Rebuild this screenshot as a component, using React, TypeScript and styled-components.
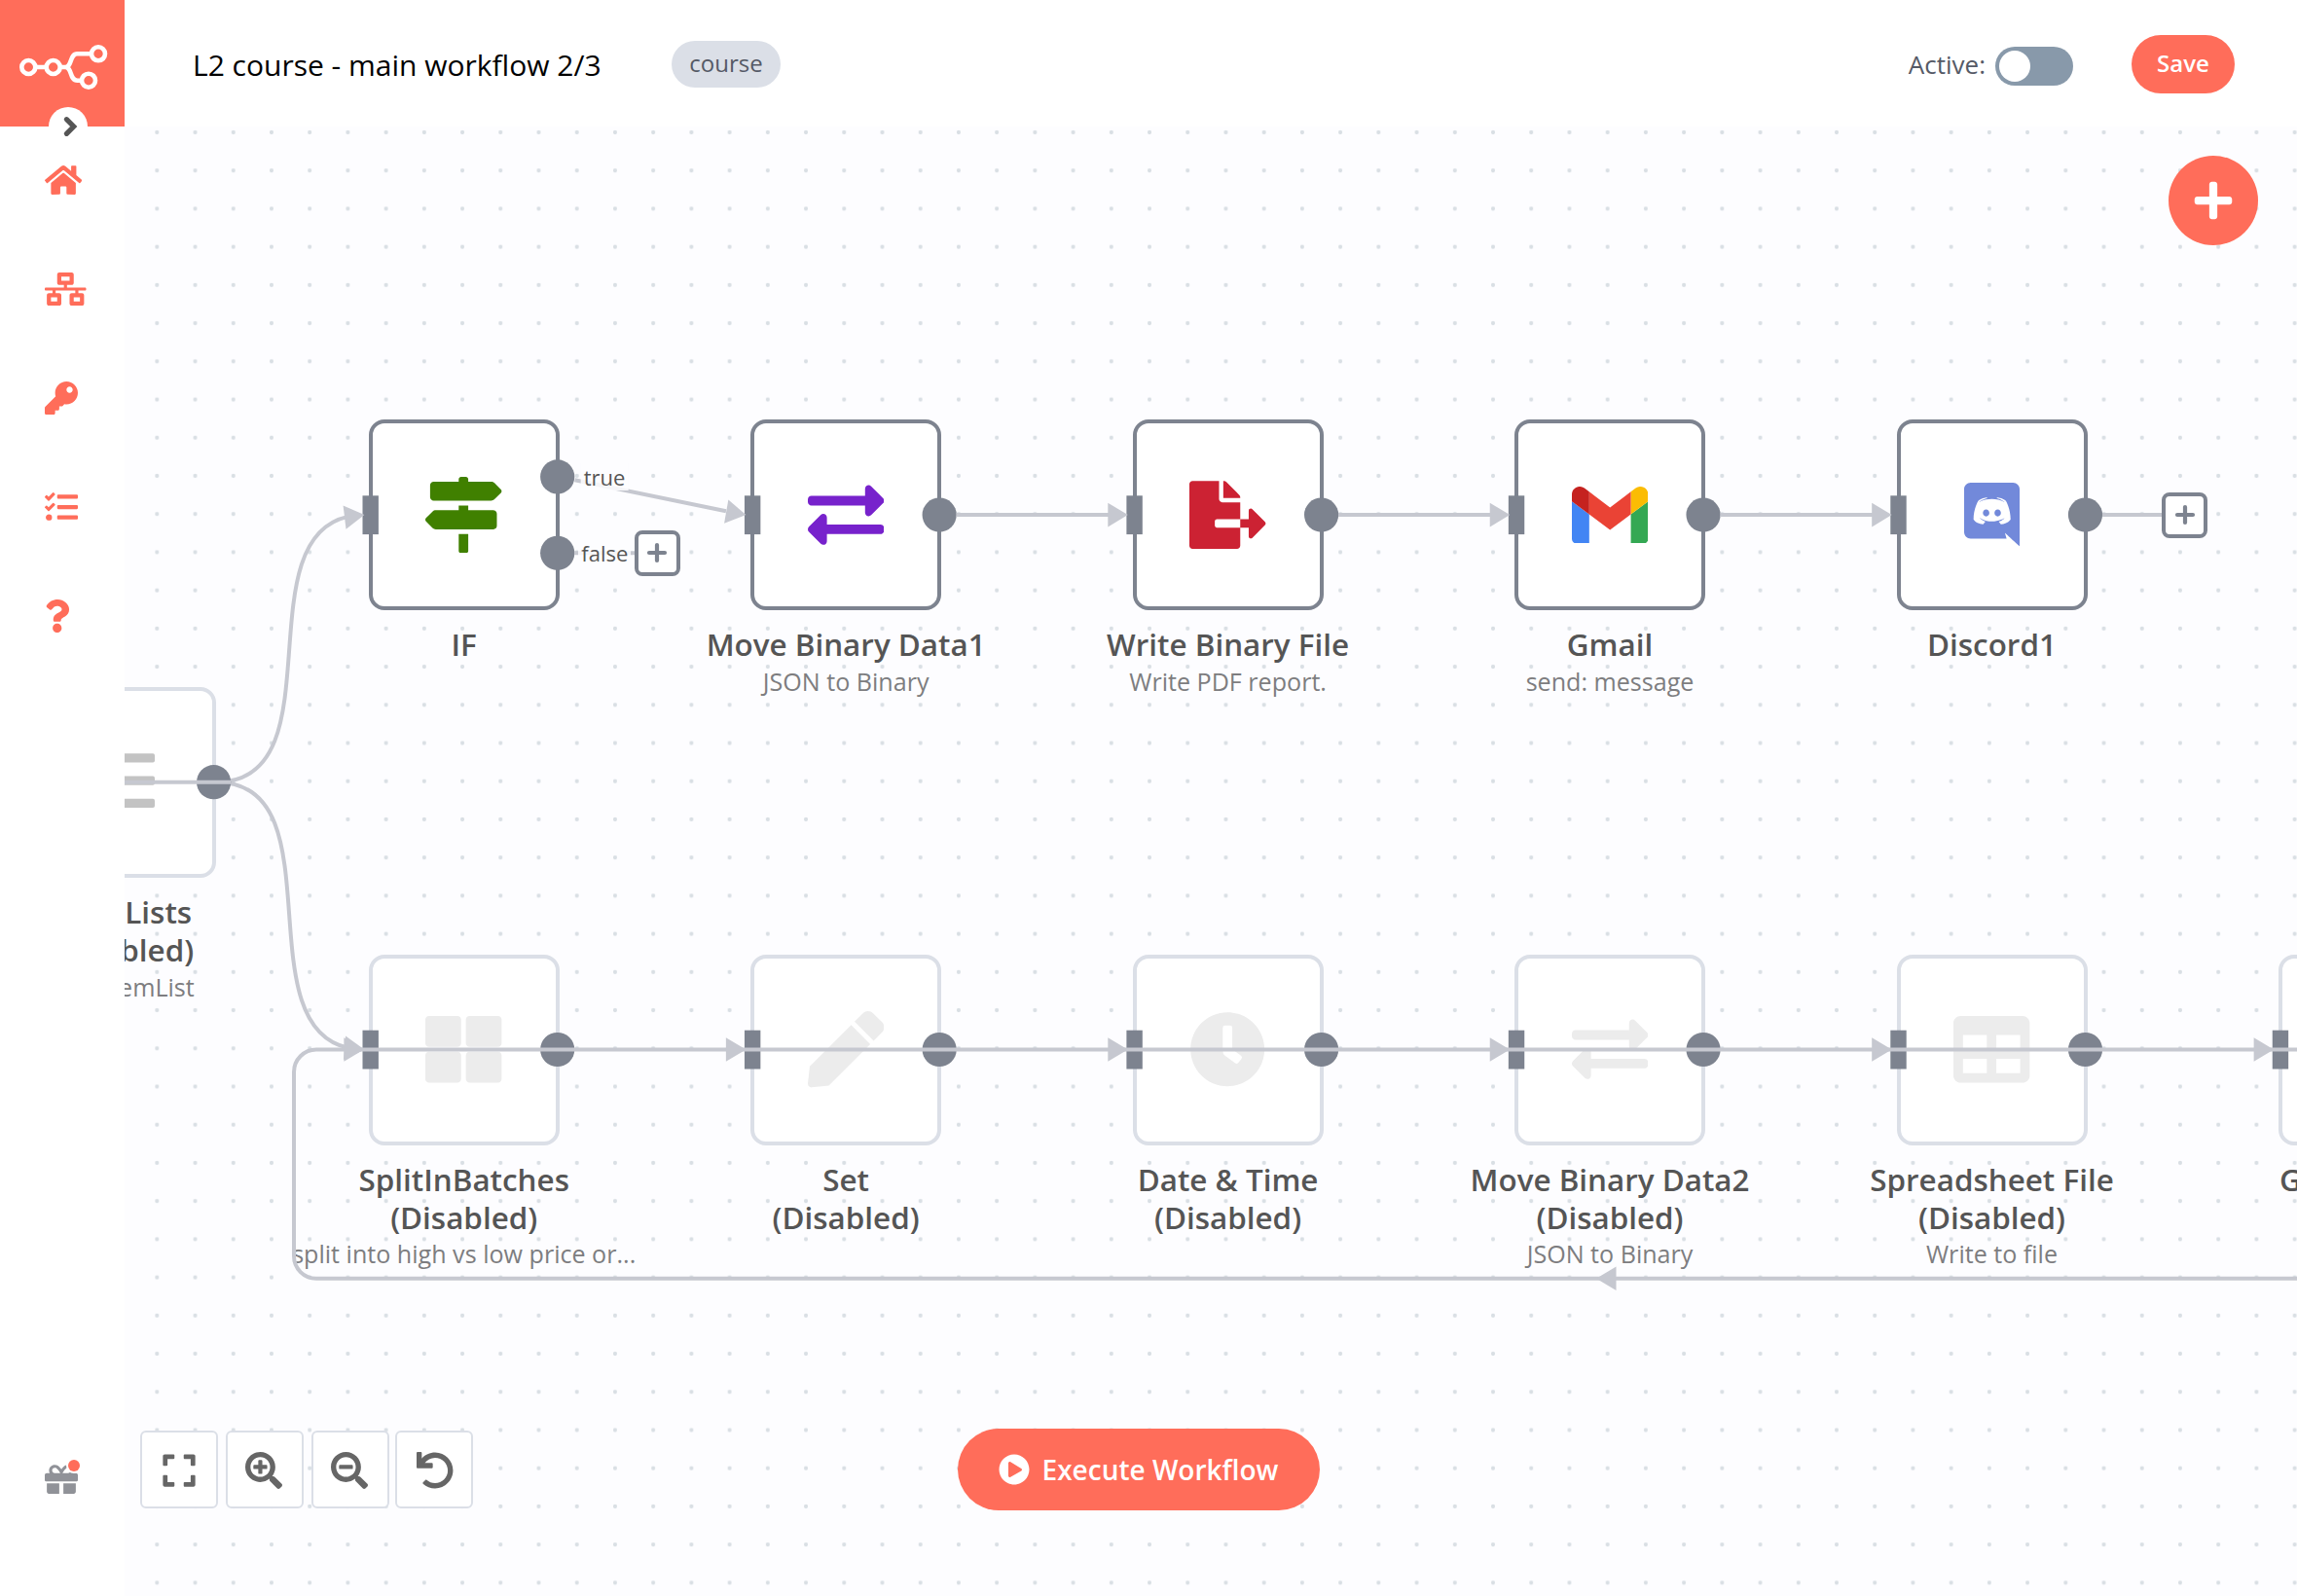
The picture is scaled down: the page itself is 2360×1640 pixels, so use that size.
import React from 'react';
import styled, { createGlobalStyle } from 'styled-components';
import {
  FaClock,
  FaExchangeAlt,
  FaExpand,
  FaFileExport,
  FaGift,
  FaHome,
  FaKey,
  FaMapSigns,
  FaNetworkWired,
  FaPen,
  FaPlayCircle,
  FaPlus,
  FaQuestion,
  FaSearchMinus,
  FaSearchPlus,
  FaTable,
  FaTasks,
  FaThLarge,
  FaUndo,
} from 'react-icons/fa';

const color = {
  primary: '#ff6d5a',
  canvas: '#fdfdff',
  endpoint: '#7d838f',
  line: '#c6c8d0',
  light: '#dbdfe7',
  disabledIcon: '#ececec',
};

const ORIGIN_X = 128;
const ORIGIN_Y = 130;
const STEP = 392.45;

const GlobalStyle = createGlobalStyle`
  * { box-sizing: border-box; }
  body {
    margin: 0;
    font-family: 'Open Sans', sans-serif;
    background: #fff;
  }
`;

const Shell = styled.div`
  display: grid;
  grid-template-columns: 128px 1fr;
  width: 2360px;
  height: 1640px;
  overflow: hidden;
`;

/* ---------- sidebar ---------- */

const Sidebar = styled.aside`
  position: relative;
  display: flex;
  flex-direction: column;
  background: #fff;
`;

const LogoBox = styled.div`
  height: 130px;
  background: ${color.primary};
`;

const Expander = styled.button`
  position: absolute;
  left: 50px;
  top: 110px;
  width: 40px;
  height: 40px;
  padding: 0;
  border: 0;
  border-radius: 50%;
  background: #fff;
  display: flex;
`;

const Menu = styled.nav`
  flex: 1;
  display: flex;
  flex-direction: column;
  margin-top: -1px;
  padding-bottom: 64px;
`;

const MenuItem = styled.a<{ $iconWidth?: number; $muted?: boolean }>`
  display: flex;
  align-items: center;
  height: 112px;
  padding-left: 46px;
  color: ${(p) => (p.$muted ? '#909298' : color.primary)};
  margin-top: ${(p) => (p.$muted ? 'auto' : '0')};
  svg {
    height: 34px;
    width: ${(p) => p.$iconWidth || 34}px;
  }
`;

const GiftWrap = styled.span`
  position: relative;
  display: flex;
`;

const NotifyDot = styled.span`
  position: absolute;
  left: 24px;
  top: -3px;
  width: 12px;
  height: 12px;
  border-radius: 50%;
  background: ${color.primary};
  box-shadow: 0 0 0 2px #fff;
`;

/* ---------- header ---------- */

const Main = styled.main`
  display: flex;
  flex-direction: column;
  min-width: 0;
`;

const Header = styled.header`
  display: flex;
  align-items: center;
  height: 130px;
  padding: 0 64px 0 70px;
  background: #fff;
`;

const Title = styled.h1`
  margin: 4px 0 0;
  width: 492px;
  font-size: 30px;
  font-weight: 400;
  line-height: 42px;
  color: #000;
  white-space: nowrap;
`;

const Tag = styled.span`
  width: 112px;
  height: 48px;
  margin-top: 2px;
  border-radius: 24px;
  background: ${color.light};
  color: #555a66;
  font-size: 24px;
  line-height: 46px;
  text-align: center;
`;

const HeaderActions = styled.div`
  display: flex;
  align-items: center;
  margin-left: auto;
`;

const ActiveLabel = styled.span`
  margin: 2px 10px 0 0;
  font-size: 26px;
  line-height: 40px;
  color: #555a66;
`;

const Toggle = styled.span`
  display: flex;
  align-items: center;
  width: 80px;
  height: 40px;
  margin-top: 6px;
  padding: 4px;
  border-radius: 20px;
  background: #8899aa;
`;

const Knob = styled.span`
  width: 32px;
  height: 32px;
  border-radius: 50%;
  background: #fff;
`;

const SaveButton = styled.button`
  width: 106px;
  height: 60px;
  margin: 2px 0 0 60px;
  padding: 0 0 3px;
  border: 0;
  border-radius: 30px;
  background: ${color.primary};
  color: #fff;
  font: 600 24px 'Open Sans', sans-serif;
`;

/* ---------- canvas ---------- */

const Canvas = styled.section`
  position: relative;
  flex: 1;
  overflow: hidden;
  background-color: ${color.canvas};
`;

const Layer = styled.svg`
  position: absolute;
  inset: 0;
  width: 2232px;
  height: 1510px;
`;

const NodeWrap = styled.div<{ $x: number; $y: number }>`
  position: absolute;
  left: ${(p) => p.$x - ORIGIN_X - 196}px;
  top: ${(p) => p.$y - ORIGIN_Y - 98}px;
  width: 392px;
  display: flex;
  flex-direction: column;
  align-items: center;
`;

const NodeBox = styled.div<{ $disabled?: boolean }>`
  width: 196px;
  height: 196px;
  display: flex;
  align-items: center;
  justify-content: center;
  border: 4px solid ${(p) => (p.$disabled ? color.light : color.endpoint)};
  border-radius: 16px;
  background: #fff;
`;

const NodeIcon = styled.span<{ $color?: string }>`
  display: flex;
  color: ${(p) => p.$color || 'inherit'};
  font-size: 78.4px;
`;

const NodeName = styled.div`
  margin-top: 15px;
  font-size: 31.4px;
  font-weight: 600;
  line-height: 39.2px;
  color: #555;
  text-align: center;
  white-space: pre-line;
`;

const NodeNote = styled.div`
  margin-top: 1.5px;
  font-size: 25.1px;
  line-height: 34.7px;
  color: #7d7d80;
  white-space: nowrap;
`;

const OutputLabel = styled.span<{ $x: number; $y: number }>`
  position: absolute;
  left: ${(p) => p.$x - ORIGIN_X}px;
  top: ${(p) => p.$y - ORIGIN_Y}px;
  transform: translate(-50%, -50%);
  padding: 0 3px;
  background: rgba(253, 253, 255, 0.85);
  font-size: 22px;
  line-height: 28px;
  color: #555;
`;

const PlusBox = styled.span<{ $x: number; $y: number }>`
  position: absolute;
  left: ${(p) => p.$x - ORIGIN_X - 23.5}px;
  top: ${(p) => p.$y - ORIGIN_Y - 23.5}px;
  width: 47px;
  height: 47px;
  display: flex;
  align-items: center;
  justify-content: center;
  border: 4px solid ${color.endpoint};
  border-radius: 8px;
  background: #fff;
`;

const AddButton = styled.button`
  position: absolute;
  top: 30px;
  right: 40px;
  width: 92px;
  height: 92px;
  display: flex;
  align-items: center;
  justify-content: center;
  padding: 0;
  border: 0;
  border-radius: 50%;
  background: ${color.primary};
  color: #fff;
  svg {
    height: 44px;
    width: 44px;
  }
`;

const ZoomControls = styled.div`
  position: absolute;
  left: 16px;
  bottom: 90px;
  display: flex;
  gap: 8px;
`;

const ControlButton = styled.button<{ $last?: boolean; $first?: boolean }>`
  width: 80px;
  height: 80px;
  margin-left: ${(p) => (p.$last ? '-2px' : '0')};
  padding: ${(p) => (p.$last ? '1px 0 0 1px' : p.$first ? '1px 0 0 0' : '1px 2px 0 0')};
  display: flex;
  align-items: center;
  justify-content: center;
  border: 2px solid ${color.light};
  border-radius: 6px;
  background: #fff;
  color: #666;
  svg {
    height: 38px;
    width: 38px;
  }
`;

const ExecuteButton = styled.button`
  position: absolute;
  left: 856px;
  bottom: 88px;
  width: 372px;
  height: 84px;
  display: flex;
  align-items: center;
  justify-content: center;
  gap: 13px;
  padding: 0 1px 1px 0;
  border: 0;
  border-radius: 42px;
  background: ${color.primary};
  color: #fff;
  font: 600 28px 'Open Sans', sans-serif;
  svg {
    width: 32px;
    height: 32px;
  }
`;

/* ---------- drawings ---------- */

const Logo = () => (
  <svg width="128" height="130" viewBox="0 0 128 130" fill="none" stroke="#fff" strokeWidth="4.6">
    <circle cx="29.3" cy="69" r="7" />
    <circle cx="54.7" cy="69" r="7" />
    <circle cx="101" cy="55.3" r="7" />
    <circle cx="91" cy="82.7" r="7" />
    <path d="M36.5 69H47.5M62 69H67C74.5 69 71 55.3 79.5 55.3H94M67 69C74.5 69 71 82.7 79.5 82.7H84" />
  </svg>
);

const Chevron = () => (
  <svg width="40" height="40" viewBox="0 0 40 40" fill="none" stroke="#555" strokeWidth="5.2" strokeLinecap="round">
    <path d="M18.4 12.7L25.7 20L18.4 27.3" />
  </svg>
);

const GmailIcon = () => (
  <svg width="78.4" height="58.8" viewBox="52 42 88 66">
    <path fill="#4285f4" d="M58 108h14V74L52 59v43c0 3.32 2.69 6 6 6" />
    <path fill="#34a853" d="M120 108h14c3.32 0 6-2.69 6-6V59l-20 15" />
    <path fill="#fbbc04" d="M120 48v26l20-15v-8c0-7.42-8.47-11.65-14.4-7.2" />
    <path fill="#ea4335" d="M72 74V48l24 18 24-18v26L96 92" />
    <path fill="#c5221f" d="M52 51v8l20 15V48l-5.6-4.2c-5.94-4.45-14.4-.22-14.4 7.2" />
  </svg>
);

const DiscordIcon = () => (
  <svg width="57" height="65.4" viewBox="0 0 448 512" fill="#7289da">
    <path d="M297.216 243.2c0 15.616-11.52 28.416-26.112 28.416-14.336 0-26.112-12.8-26.112-28.416s11.52-28.416 26.112-28.416c14.592 0 26.112 12.8 26.112 28.416zm-119.552-28.416c-14.592 0-26.112 12.8-26.112 28.416s11.776 28.416 26.112 28.416c14.592 0 26.112-12.8 26.112-28.416.256-15.616-11.52-28.416-26.112-28.416zM448 52.736V512c-64.494-56.994-43.868-38.128-118.784-107.776l13.568 47.36H52.48C23.552 451.584 0 428.032 0 398.848V52.736C0 23.552 23.552 0 52.48 0h343.04C424.448 0 448 23.552 448 52.736zm-72.96 242.688c0-82.432-36.864-149.248-36.864-149.248-36.864-27.648-71.936-26.88-71.936-26.88l-3.584 4.096c43.52 13.312 63.744 32.512 63.744 32.512-60.811-33.329-132.244-33.335-191.232-7.424-9.472 4.352-15.104 7.424-15.104 7.424s21.248-20.224 67.328-33.536l-2.56-3.072s-35.072-.768-71.936 26.88c0 0-36.864 66.816-36.864 149.248 0 0 21.504 37.12 78.08 38.912 0 0 9.472-11.52 17.152-21.248-32.512-9.728-44.8-30.208-44.8-30.208 3.766 2.636 9.976 6.053 10.496 6.4 43.21 24.198 104.588 32.126 159.744 8.96 8.96-3.328 18.944-8.192 29.44-15.104 0 0-12.8 20.992-46.336 30.464 7.68 9.728 16.896 20.736 16.896 20.736 56.576-1.792 78.336-38.912 78.336-38.912z" />
  </svg>
);

const ListIcon = () => (
  <svg width="70" height="78" viewBox="0 0 70 78" fill="#c3c3c3">
    {[9.2, 32.4, 55.7].map((y) => (
      <g key={y}>
        <rect x="0" y={y} width="10" height="9.3" rx="2" />
        <rect x="18" y={y} width="52" height="9.3" rx="2" />
      </g>
    ))}
  </svg>
);

const PlusGlyph = () => (
  <svg width="22" height="22" viewBox="0 0 22 22" stroke={color.endpoint} strokeWidth="4.2" strokeLinecap="round">
    <path d="M11 3V19M3 11H19" />
  </svg>
);

/* ---------- workflow data ---------- */

type FlowNode = {
  x: number;
  y: number;
  name: string;
  note?: string;
  icon: React.ReactNode;
  tint?: string;
  disabled?: boolean;
  outputs: number[];
};

const ROW1 = 529.1;
const ROW2 = 1078.5;
const MID = 803.7;
const FIRST = 476.7;
const col = (n: number) => FIRST + STEP * n;
const off = '\n(Disabled)';

const nodes: FlowNode[] = [
  { x: 123.6, y: MID, name: 'Item Lists' + off, note: 'sort: itemList', icon: <ListIcon />, disabled: true, outputs: [0] },
  { x: col(0), y: ROW1, name: 'IF', icon: <FaMapSigns />, tint: '#408000', outputs: [-39.2, 39.2] },
  { x: col(1), y: ROW1, name: 'Move Binary Data1', note: 'JSON to Binary', icon: <FaExchangeAlt />, tint: '#7722cc', outputs: [0] },
  { x: col(2), y: ROW1, name: 'Write Binary File', note: 'Write PDF report.', icon: <FaFileExport />, tint: '#cc2233', outputs: [0] },
  { x: col(3), y: ROW1, name: 'Gmail', note: 'send: message', icon: <GmailIcon />, outputs: [0] },
  { x: col(4), y: ROW1, name: 'Discord1', icon: <DiscordIcon />, outputs: [0] },
  { x: col(0), y: ROW2, name: 'SplitInBatches' + off, note: 'split into high vs low price or...', icon: <FaThLarge />, tint: color.disabledIcon, disabled: true, outputs: [0] },
  { x: col(1), y: ROW2, name: 'Set' + off, icon: <FaPen />, tint: color.disabledIcon, disabled: true, outputs: [0] },
  { x: col(2), y: ROW2, name: 'Date & Time' + off, icon: <FaClock />, tint: color.disabledIcon, disabled: true, outputs: [0] },
  { x: col(3), y: ROW2, name: 'Move Binary Data2' + off, note: 'JSON to Binary', icon: <FaExchangeAlt />, tint: color.disabledIcon, disabled: true, outputs: [0] },
  { x: col(4), y: ROW2, name: 'Spreadsheet File' + off, note: 'Write to file', icon: <FaTable />, tint: color.disabledIcon, disabled: true, outputs: [0] },
  { x: col(5), y: ROW2, name: 'Google Drive', icon: null, disabled: true, outputs: [0] },
];

const Arrow = ({ x, y, turn = 0 }: { x: number; y: number; turn?: number }) => (
  <path d="M0 0L-20.5 -12.3V12.3Z" fill={color.line} transform={`translate(${x} ${y}) rotate(${turn})`} />
);

const viewBox = `${ORIGIN_X} ${ORIGIN_Y} 2232 1510`;

const Dots = () => (
  <Layer viewBox={viewBox}>
    <defs>
      <pattern id="dots" x="141.7" y="116.4" width="39.22" height="39.22" patternUnits="userSpaceOnUse">
        <circle cx="19.61" cy="19.61" r="2.1" fill="#d9dfe4" />
      </pattern>
    </defs>
    <rect x={ORIGIN_X} y={ORIGIN_Y} width="2232" height="1510" fill="url(#dots)" />
  </Layer>
);

/* Curves leaving the shared output, tucked under the endpoints. */
const Branches = () => (
  <Layer viewBox={viewBox} fill="none" stroke={color.line} strokeWidth="4">
    {[ROW1, ROW2].map((y) => (
      <path key={y} pathLength="100" strokeDasharray="95 5" d={`M222.5 ${MID}C353 ${MID} 240.5 ${y} 375 ${y}`} />
    ))}
  </Layer>
);

const Endpoints = () => (
  <Layer viewBox={viewBox} fill={color.endpoint}>
    {nodes.map((n) => (
      <g key={n.x + '-' + n.y}>
        <rect x={n.x - 104.2} y={n.y - 19.8} width="16.4" height="39.8" />
        {n.outputs.map((o) => (
          <circle key={o} cx={n.x + 96} cy={n.y + o} r="17.6" />
        ))}
      </g>
    ))}
  </Layer>
);

const Connections = () => (
  <Layer viewBox={viewBox} fill="none" stroke={color.line} strokeWidth="4">
    <path d={`M128 ${MID}H237`} />
    <path d="M590.5 493.3L746 525.2" />
    <path d="M590 568.3H652" />
    {[1, 2, 3].map((n) => (
      <path key={n} d={`M${col(n) + 113.5} ${ROW1}H${col(n + 1) - 120}`} />
    ))}
    <path d={`M${col(4) + 113.5} ${ROW1}H2222`} />
    <path d={`M2360 1313.8H325a23 23 0 0 1 -23 -23V${ROW2 + 23}a23 23 0 0 1 23 -23H2360`} />
    <g stroke="none">
      <Arrow x={374.4} y={ROW1} turn={-7} />
      <Arrow x={374.4} y={ROW2} turn={5} />
      <Arrow x={766.4} y={ROW1} turn={10} />
      {[2, 3, 4].map((n) => (
        <Arrow key={n} x={col(n) - 102.8} y={ROW1} />
      ))}
      {[0, 1, 2, 3, 4, 5].map((n) => (
        <Arrow key={n} x={col(n) - 102.8} y={ROW2} />
      ))}
      <Arrow x={1640} y={1313.8} turn={180} />
    </g>
  </Layer>
);

const menu = [
  { Icon: FaHome, width: 38.25 },
  { Icon: FaNetworkWired, width: 42.5 },
  { Icon: FaKey, width: 34 },
  { Icon: FaTasks, width: 34 },
  { Icon: FaQuestion, width: 25.5 },
];

export default function App() {
  return (
    <>
      <GlobalStyle />
      <Shell>
        <Sidebar>
          <LogoBox>
            <Logo />
          </LogoBox>
          <Menu>
            {menu.map(({ Icon, width }, i) => (
              <MenuItem key={i} $iconWidth={width}>
                <Icon />
              </MenuItem>
            ))}
            <MenuItem $muted>
              <GiftWrap>
                <FaGift />
                <NotifyDot />
              </GiftWrap>
            </MenuItem>
          </Menu>
          <Expander>
            <Chevron />
          </Expander>
        </Sidebar>
        <Main>
          <Header>
            <Title>L2 course - main workflow 2/3</Title>
            <Tag>course</Tag>
            <HeaderActions>
              <ActiveLabel>Active:</ActiveLabel>
              <Toggle>
                <Knob />
              </Toggle>
              <SaveButton>Save</SaveButton>
            </HeaderActions>
          </Header>
          <Canvas>
            <Dots />
            {nodes.map((n) => (
              <NodeWrap key={n.name + n.x} $x={n.x} $y={n.y}>
                <NodeBox $disabled={n.disabled}>
                  <NodeIcon $color={n.tint}>{n.icon}</NodeIcon>
                </NodeBox>
                <NodeName>{n.name}</NodeName>
                {n.note && <NodeNote>{n.note}</NodeNote>}
              </NodeWrap>
            ))}
            <Branches />
            <Endpoints />
            <Connections />
            <OutputLabel $x={621} $y={489.6}>true</OutputLabel>
            <OutputLabel $x={621.3} $y={568.2}>false</OutputLabel>
            <PlusBox $x={675} $y={568.3}>
              <PlusGlyph />
            </PlusBox>
            <PlusBox $x={2244.7} $y={ROW1}>
              <PlusGlyph />
            </PlusBox>
            <AddButton>
              <FaPlus />
            </AddButton>
            <ZoomControls>
              <ControlButton $first>
                <FaExpand />
              </ControlButton>
              <ControlButton>
                <FaSearchPlus />
              </ControlButton>
              <ControlButton>
                <FaSearchMinus />
              </ControlButton>
              <ControlButton $last>
                <FaUndo />
              </ControlButton>
            </ZoomControls>
            <ExecuteButton>
              <FaPlayCircle />
              Execute Workflow
            </ExecuteButton>
          </Canvas>
        </Main>
      </Shell>
    </>
  );
}
